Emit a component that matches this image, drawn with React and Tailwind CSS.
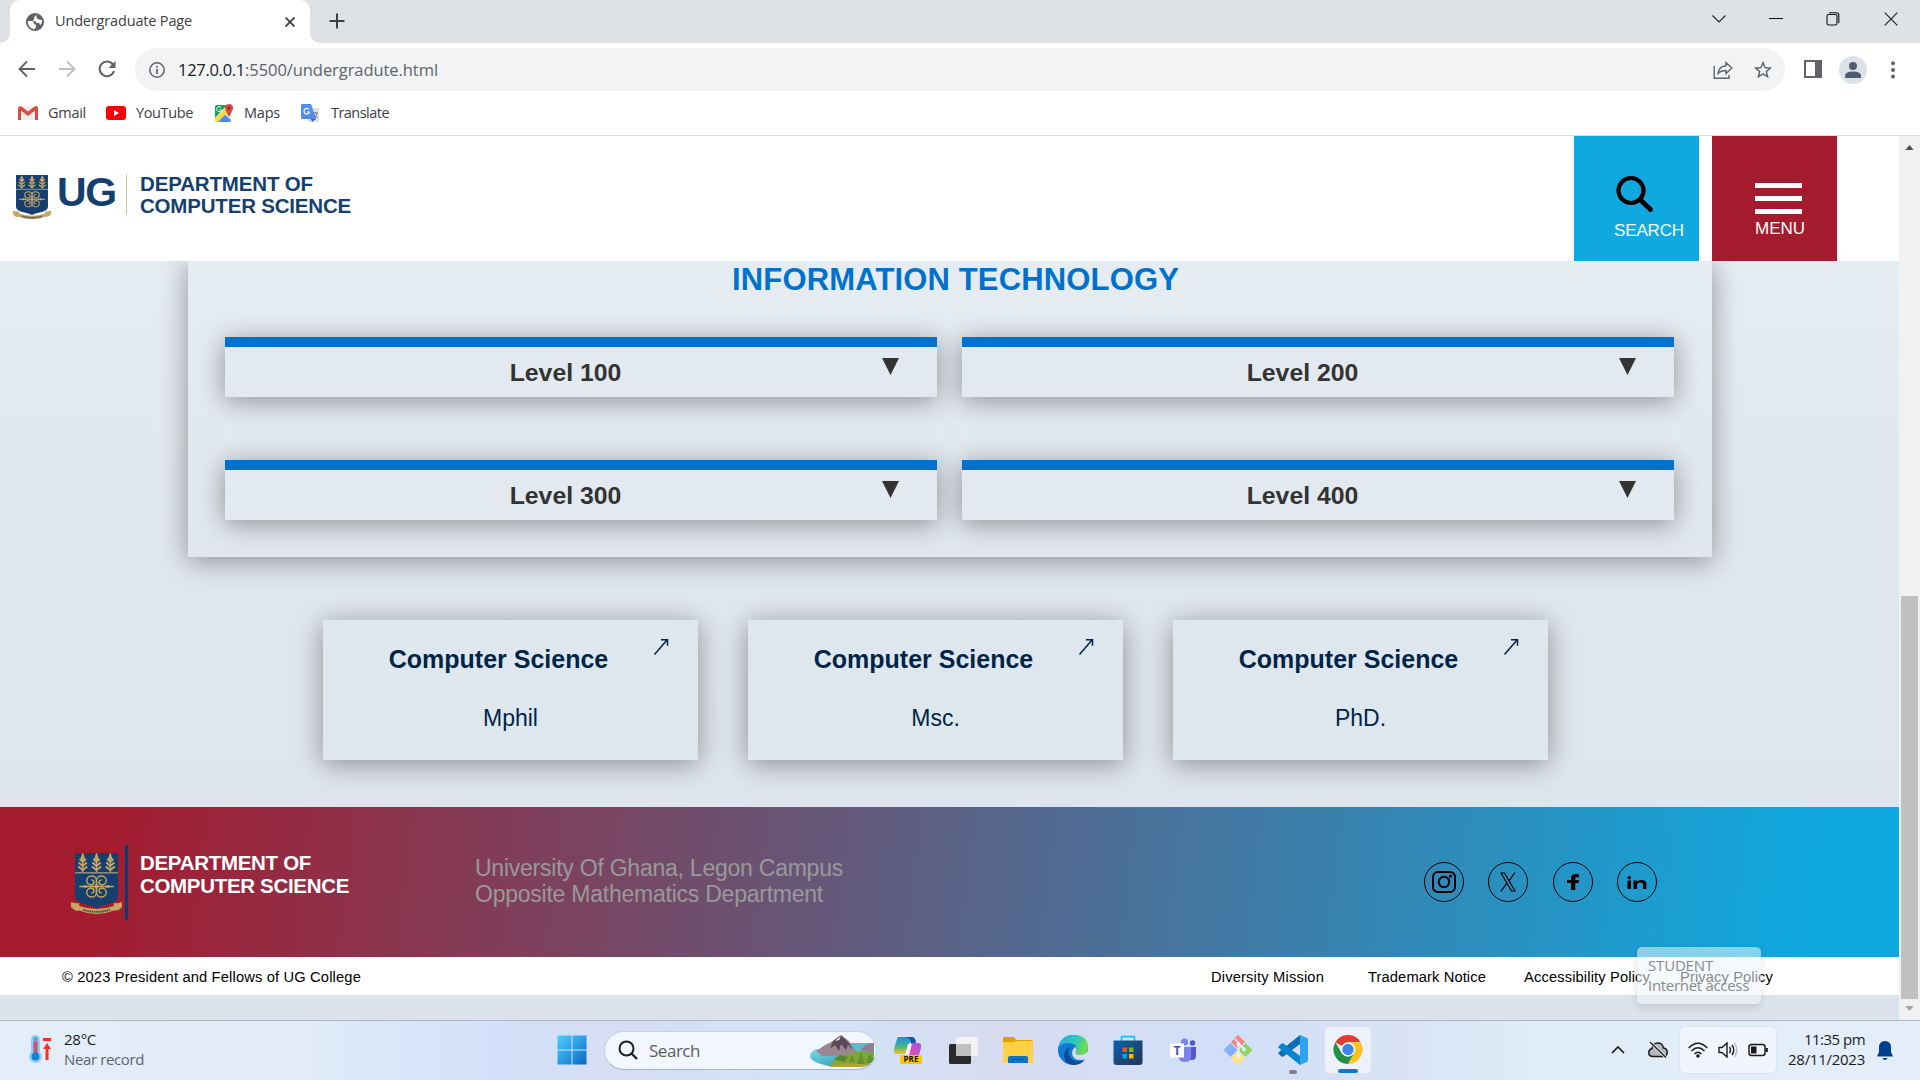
import React from "react";

const segoe = "font-['Open_Sans','Noto_Sans',sans-serif]";
const arial = "font-['Liberation_Sans',Arial,sans-serif]";

// Text set to a fixed measure by adjusting its tracking.
function Txt({ w, className, children }) {
  const ref = React.useRef(null);
  const [ls, setLs] = React.useState(0);
  React.useLayoutEffect(() => {
    const fit = () => {
      const el = ref.current;
      if (!el) return;
      el.style.letterSpacing = "0px";
      const d = (w - el.getBoundingClientRect().width) / children.length;
      el.style.letterSpacing = d + "px";
      setLs(d);
    };
    fit();
    document.fonts?.ready.then(fit);
  }, [w, children]);
  return (
    <span ref={ref} className={"inline-block whitespace-nowrap " + className} style={{ letterSpacing: ls + "px" }}>
      {children}
    </span>
  );
}

function Swirls({ stroke }) {
  const curl = "M25 33.500q-.5-3 0-6.500a4.800 4.500 0 1 0-5.500 5q3.200-.3 3-3-.3-2.200-2.500-2";
  return (
    <g fill="none" stroke={stroke} strokeWidth="1.400">
      <path d={curl} />
      <path d={curl} transform="translate(50 0) scale(-1 1)" />
      <path d={curl} transform="translate(0 67) scale(1 -1)" />
      <path d={curl} transform="translate(50 67) scale(-1 -1)" />
      <path d="M8 33.500h34" />
      <path d="M11 33.500q3-2 6 0-3 2-6 0zM39 33.500q-3-2-6 0 3 2 6 0z" fill={stroke} strokeWidth=".6" />
    </g>
  );
}

function Crest({ className }) {
  const gold = "#c9a563";
  return (
    <svg viewBox="0 0 50 62" preserveAspectRatio="none" className={className}>
      <path d="M4 0h42v44q0 5-11 7.500-6 1-10 3.500-4-2.500-10-3.500Q4 49 4 44z" fill="#153f6f" />
      <rect x="4" y="19" width="42" height="1.600" fill="#8d8c78" />
      {[11.500, 25, 38.500].map((x) => (
        <g key={x} stroke={gold} fill={gold} strokeWidth="1.300">
          <path d={`M${x} 1l1.600 5h-3.200zM${x} 19V3`} />
          <path fill="none" strokeWidth="1.900" d={`M${x - 3} 6l3 3 3-3M${x - 4} 9.500l4 3.500 4-3.500M${x - 4.500} 13.500l4.500 3.500 4.500-3.500`} />
        </g>
      ))}
      <Swirls stroke={gold} />
      <circle cx="25" cy="33.500" r="2" fill={gold} />
      <path d="M0 49q5 2 8 1v3q17 6 34 0v-3q3 1 8-1v5l-2 2q-2 2-6 1.500-17 7-34 0-4 1-6-1.500L0 54z" fill={gold} />
      <path d="M12 56.800q13 4 26 0" fill="none" stroke="#4a4a48" strokeWidth="2" strokeDasharray="1.500 .6" />
    </svg>
  );
}

function ChromeTabs() {
  return (
    <div className="flex h-[43px] shrink-0 bg-[#dee1e6]">
      <div className="flex w-[10px] items-end bg-white"><div className="h-full w-full rounded-br-[10px] bg-[#dee1e6]" /></div>
      <div className="flex w-[300px] items-center rounded-t-[10px] bg-white pl-4 pr-[12px]">
        <svg viewBox="0 0 18 18" className="h-[18px] w-[18px]">
          <circle cx="9" cy="9" r="9" fill="#5f6368" />
          <path d="M1.800 8h4q2 0 2 2t2.200 1.800V14l-1.500 2.200Q2 15.500 1.800 8zM10.500 2L8 4.500v2L6.500 8q4-.5 4 2h2.300q1.200 0 1.200 2.500Q16.500 10 16 7l-3-.5-2.200-1.200z" fill="#fff" />
        </svg>
        <Txt w={137} className="ml-[11px] text-[14.500px] leading-none text-[#3c4043]">Undergraduate Page</Txt>
        <svg viewBox="0 0 10 10" className="ml-auto mr-[3px] h-[10px] w-[10px]" stroke="#3c4043" strokeWidth="1.800"><path d="M.5.5l9 9M9.500.5l-9 9" /></svg>
      </div>
      <div className="flex w-[10px] bg-white"><div className="h-full w-full rounded-bl-[10px] bg-[#dee1e6]" /></div>
      <svg viewBox="0 0 16 16" className="ml-[9px] mt-[13px] h-4 w-4" stroke="#3c4043" strokeWidth="2"><path d="M8 .5v15M.5 8h15" /></svg>
      <div className="ml-auto flex items-start pt-[11px]" >
        <svg viewBox="0 0 14 16" className="mr-[43px] h-4 w-[14px]" fill="none" stroke="#222" strokeWidth="1.200"><path d="M.5 4.500L7 11l6.500-6.500" /></svg>
        <svg viewBox="0 0 14 16" className="mr-[43px] h-4 w-[14px]" stroke="#111" strokeWidth="1"><path d="M0 7.500h14" /></svg>
        <svg viewBox="0 0 14 14" className="mr-[44px] mt-px h-[14px] w-[14px]" fill="none" stroke="#111" strokeWidth="1.100"><rect x="1" y="2.500" width="10" height="10.500" rx="1.500" /><path d="M3 .8h7.500q2.300 0 2.300 2.300V11" /></svg>
        <svg viewBox="0 0 14 14" className="mr-[22px] mt-px h-[14px] w-[14px]" stroke="#222" strokeWidth="1.200"><path d="M.7.7l12.600 12.600M13.300.7L.7 13.300" /></svg>
      </div>
    </div>
  );
}

function ChromeBar() {
  return (
    <div className="flex h-[53px] shrink-0 items-center bg-white">
      <svg viewBox="0 0 18 18" className="-mt-px ml-[18px] h-[18px] w-[18px]" fill="none" stroke="#5f6368" strokeWidth="1.900"><path d="M17 9H2M9 1.500L1.500 9 9 16.500" /></svg>
      <svg viewBox="0 0 18 18" className="-mt-px ml-[22px] h-[18px] w-[18px]" fill="none" stroke="#bdc1c6" strokeWidth="1.900"><path d="M1 9h15M9 1.500L16.500 9 9 16.500" /></svg>
      <svg viewBox="0 0 18 18" className="-mt-px ml-[22px] h-[18px] w-[18px]" fill="none" stroke="#5f6368" strokeWidth="2"><path d="M15.200 5A7.300 7.300 0 1 0 16 11" /><path d="M17.500 1v7h-7z" fill="#5f6368" stroke="none" /></svg>
      <div className="ml-[19px] flex h-[43px] w-[1650px] items-center rounded-full bg-[#f1f3f4] pl-[14px] pr-[11px]">
        <svg viewBox="0 0 16 16" className="h-4 w-4" fill="none" stroke="#5f6368" strokeWidth="1.500"><circle cx="8" cy="8" r="7.200" /><path d="M8 7v5M8 4v1.800" strokeWidth="1.700" /></svg>
        <div className="ml-[13px] mt-[1px] flex text-[16.500px] leading-none text-[#5f6368]">
          <Txt w={67} className="text-[#202124]">127.0.0.1</Txt>
          <Txt w={193} className="">:5500/undergradute.html</Txt>
        </div>
        <svg viewBox="0 0 20 18" className="ml-auto h-[18px] w-5" fill="none" stroke="#5f6368" strokeWidth="1.400"><path d="M1.200 5v12.200H16V14M13 1.500L18.800 7 13 12.500V9.500q-5 0-8 3Q6 5 13 4.700z" /></svg>
        <svg viewBox="0 0 24 24" className="ml-[19px] h-[22px] w-[22px]" fill="#5f6368"><path d="M22 9.240l-7.190-.62L12 2 9.190 8.630 2 9.240l5.460 4.730L5.820 21 12 17.270 18.180 21l-1.630-7.030L22 9.240zM12 15.400l-3.760 2.270 1-4.280-3.320-2.880 4.380-.38L12 6.100l1.710 4.040 4.380.38-3.320 2.880 1 4.280L12 15.400z" /></svg>
      </div>
      <div className="-mt-px ml-[19px] h-[18px] w-[18px] border-2 border-r-[7px] border-[#5f6368]" />
      <svg viewBox="0 0 28 28" className="ml-[17px] h-7 w-7"><circle cx="14" cy="14" r="14" fill="#dee1e6" /><circle cx="14" cy="10" r="4" fill="#4f5b70" /><path d="M6 22v-2q0-4.500 8-4.500t8 4.500v2z" fill="#4f5b70" /></svg>
      <svg viewBox="0 0 4 18" className="ml-[24px] h-[18px] w-1" fill="#5f6368"><circle cx="2" cy="2.200" r="2" /><circle cx="2" cy="9" r="2" /><circle cx="2" cy="15.500" r="2" /></svg>
    </div>
  );
}

function Bookmarks() {
  const t = "text-[14.500px] leading-none text-[#3c4043]";
  return (
    <div className="flex h-[40px] shrink-0 items-start border-b border-[#d8d9dc] bg-white pl-[18px] pt-[4px]">
      <div className="flex h-[26px] items-center">
        <svg viewBox="0 0 20 14" className="h-[14px] w-5"><path d="M0 0h20v14H0z" fill="#eee" /><path d="M0 2v12h3V4.500L10 10l7-5.500V14h3V2q-1-3-3.500-1.500L10 5.500 3.500.5Q1-.5 0 2z" fill="#dd4b3e" /></svg>
        <Txt w={38} className={t + " ml-[10px]"}>Gmail</Txt>
        <svg viewBox="0 0 20 14" className="ml-5 h-[14px] w-5"><rect width="20" height="14" rx="3" fill="#f00" /><path d="M8 4l5 3-5 3z" fill="#fff" /></svg>
        <Txt w={57} className={t + " ml-[10px]"}>YouTube</Txt>
        <svg viewBox="0 0 18 18" className="ml-[22px] h-[18px] w-[18px]"><rect y="1" width="16" height="17" rx="2" fill="#e8eaed" /><path d="M0 3q0-2 2-2h10L0 14z" fill="#1e9e55" /><path d="M8 9l8 7q0 2-2 2H3z" fill="#4a8af4" /><path d="M0 15L11 4l3 3L3 18H2q-2 0-2-2z" fill="#fdd835" /><path d="M14 0q4 0 4 4 0 2-4 9-4-7-4-9 0-4 4-4z" fill="#dd4b3e" /><circle cx="14" cy="4" r="1.400" fill="#7b231d" /><path d="M6 3.500A2.500 2.500 0 1 0 6.500 6H4.500" fill="none" stroke="#fff" /></svg>
        <Txt w={36} className={t + " ml-[11px]"}>Maps</Txt>
        <svg viewBox="0 0 18 18" className="ml-[21px] h-[18px] w-[18px]"><rect x="7" y="4" width="11" height="14" rx="1" fill="#dfe1e5" /><path d="M1 0h9l5 15H1q-1 0-1-1V1q0-1 1-1z" fill="#4f8df5" /><path d="M10 15h5l-4 3z" fill="#2a5fd0" /><path d="M8 5.500A2.800 2.800 0 1 0 8.500 8H6" fill="none" stroke="#fff" strokeWidth="1.200" /><path d="M12 9h5M14.500 8v1M16 9.500q-1 3-3 4.500M13.500 11l3 3" fill="none" stroke="#667" strokeWidth=".9" /></svg>
        <Txt w={58} className={t + " ml-[12px]"}>Translate</Txt>
      </div>
    </div>
  );
}

const shadow = "shadow-[0_4px_26px_rgba(16,14,4,0.4)]";

function Level({ n }) {
  return (
    <div className={"flex h-[60px] w-[712px] border-t-[10px] border-[#0072ce] bg-[#e2e9f0] text-[#333] " + shadow}>
      <div className="w-[681px] text-center text-[24.800px] leading-[51px] font-bold">Level {n}</div>
      <svg viewBox="0 0 17 17" className="-ml-[24px] mt-[11px] h-[17px] w-[17px]"><path d="M0 0h17L8.500 17z" fill="#333" /></svg>
    </div>
  );
}

function Programme({ kind }) {
  return (
    <div className={"flex h-[140px] w-[375px] bg-[#dfe7ee] text-[#002548] " + shadow}>
      <div className="w-[375px] text-center">
        <div className="mt-[25px] pr-[24px] text-[25px] leading-[28px] font-bold">Computer Science</div>
        <div className="mt-[31px] text-[23px] leading-[28px]">{kind}</div>
      </div>
      <svg viewBox="0 0 16 17" className="-ml-[45px] mt-[18px] h-[17px] w-4 shrink-0" fill="none" stroke="#002548" strokeWidth="1.500"><path d="M1.500 16.500L14 2M8 1.700h6.500v6" /></svg>
    </div>
  );
}

function SiteHeader() {
  return (
    <div className="flex h-[125px] shrink-0 bg-white">
      <Crest className="ml-[13px] mt-[39px] h-[45px] w-[38px]" />
      <Txt w={59} className="ml-[6px] mt-[34px] h-[44px] text-[41px] leading-[44px] font-bold text-[#153f6f]">UG</Txt>
      <div className="ml-[10px] mt-[38px] h-[41px] w-px bg-[#d9c49a]" />
      <div className="ml-[13px] mt-[37px] flex flex-col items-start text-[20.500px] leading-[22px] font-bold text-[#153f6f]">
        <Txt w={173} className="">DEPARTMENT OF</Txt>
        <Txt w={211} className="">COMPUTER SCIENCE</Txt>
      </div>
      <div className="ml-auto h-[125px] w-[125px] bg-[#0fa9df] pl-10 pt-10 text-white">
        <svg viewBox="0 0 42 38" className="h-[38px] w-[42px]" fill="none" stroke="#000"><circle cx="17" cy="14.500" r="12.500" strokeWidth="4.200" /><path d="M26.500 24L36.500 33.500" strokeWidth="5" strokeLinecap="round" /></svg>
        <div className="mt-[7px] text-[17px] leading-[19px]"><Txt w={70} className="">SEARCH</Txt></div>
      </div>
      <div className="ml-[13px] mr-[62px] h-[125px] w-[125px] bg-[#a51b2e] pl-[43px] pt-[47px] text-white">
        <div className="flex w-[47px] flex-col gap-2">
          <div className="h-[5px] bg-white" />
          <div className="h-[5px] bg-white" />
          <div className="h-[5px] bg-white" />
        </div>
        <div className="mt-[5px] text-[17px] leading-[19px]"><Txt w={50} className="">MENU</Txt></div>
      </div>
    </div>
  );
}

function Socials() {
  const ring = "flex h-10 w-10 items-center justify-center rounded-full border-[1.500px] border-black";
  return (
    <div className="ml-auto mr-[242px] mt-[55px] flex gap-[24.500px]">
      <div className={ring}><svg viewBox="0 0 24 22" className="h-[22px] w-6" fill="none" stroke="#000" strokeWidth="2"><rect x="1" y="1" width="22" height="20" rx="5" /><circle cx="12" cy="11" r="5.200" /><circle cx="18.500" cy="5.200" r=".6" /></svg></div>
      <div className={ring}><svg viewBox="0 0 16 20" className="h-5 w-4" fill="none" stroke="#000" strokeWidth="1.200"><path d="M1 1h3.500l10.500 18h-3.500zM15 .5L9 8.800M7 11.200L.8 19.500" /></svg></div>
      <div className={ring}><svg viewBox="0 0 12 16" className="h-4 w-3"><path d="M12 .3v3H9.800Q8.300 3.300 8.300 4.500V6H12l-.5 3H8.300v7H4V9H0V6h4V4.500Q4 0 8.500 0z" fill="#000" /></svg></div>
      <div className={ring}><svg viewBox="0 0 20 13" className="h-[13px] w-5" fill="#000"><circle cx="2.200" cy="1.800" r="1.800" /><path d="M.5 4.500H4V13H.5zM6.500 4.500H10v1q1.500-1.500 4-1.500 5.500 0 5.500 4v5H16V8.500q0-2-2.500-2-3.500 0-3.500 2.500v4H6.500z" /></svg></div>
    </div>
  );
}

function Footer() {
  return (
    <>
      <div className="flex h-[150px] shrink-0 bg-[linear-gradient(97deg,#a51b2e_5%,#0fa9df_95%)]">
        <Crest className="ml-[71px] mt-[46px] h-[62px] w-[51px]" />
        <div className="ml-[3px] mt-[38px] h-[75px] w-[3px] bg-[#063e6f]" />
        <div className="ml-[12px] mt-[44px] flex w-[335px] flex-col items-start text-[20.500px] leading-[23px] font-bold text-white">
          <Txt w={171} className="">DEPARTMENT OF</Txt>
          <Txt w={209} className="">COMPUTER SCIENCE</Txt>
        </div>
        <div className="mt-[48px] flex flex-col items-start text-[23px] leading-[26px] text-[#999]">
          <Txt w={368} className="">University Of Ghana, Legon Campus</Txt>
          <Txt w={348} className="">Opposite Mathematics Department</Txt>
        </div>
        <Socials />
      </div>
      <div className="flex h-[38px] shrink-0 items-center bg-white pl-[62px] pr-[126px] pt-[3px] text-[14.700px] text-black">
        <Txt w={299} className="mr-auto">© 2023 President and Fellows of UG College</Txt>
        <Txt w={113} className="mr-[44px]">Diversity Mission</Txt>
        <Txt w={118} className="mr-[38px]">Trademark Notice</Txt>
        <Txt w={126} className="mr-[30px]">Accessibility Policy</Txt>
        <Txt w={93} className="">Privacy Policy</Txt>
      </div>
    </>
  );
}

function Page() {
  return (
    <div className={"flex h-[884px] w-[1899px] flex-col overflow-hidden bg-[linear-gradient(#e5edf2_14%,#e1e8ef_35%,#dfe6ee_60%,#dce3ec)] " + arial}>
      <div className="relative z-10"><SiteHeader /></div>
      <div className={"ml-[188px] h-[296px] w-[1524px] shrink-0 " + shadow}>
        <div className="h-[76px] pt-[1px] pl-[11px] text-center text-[31px] leading-[36px] font-bold text-[#0072ce]"><Txt w={447} className="">INFORMATION TECHNOLOGY</Txt></div>
        <div className="flex flex-wrap gap-x-[25px] gap-y-[63px] pl-[37px]">
          {[100, 200, 300, 400].map((n) => <Level key={n} n={n} />)}
        </div>
      </div>
      <div className="ml-[323px] mt-[63px] mb-[47px] flex shrink-0 gap-[50px]">
        {["Mphil", "Msc.", "PhD."].map((k) => <Programme key={k} kind={k} />)}
      </div>
      <div className="relative z-10"><Footer /></div>
    </div>
  );
}

function Scrollbar() {
  return (
    <div className="flex w-[21px] flex-col items-center bg-[#f1f1f1]">
      <svg viewBox="0 0 10 6" className="mt-[9px] h-[5px] w-[9px]"><path d="M0 6l5-6 5 6z" fill="#505050" /></svg>
      <div className="mt-[446px] h-[403px] w-[17px] bg-[#c1c1c1]" />
      <svg viewBox="0 0 10 6" className="mt-[7px] h-[5px] w-[9px]"><path d="M0 0l5 6 5-6z" fill="#a3a3a3" /></svg>
    </div>
  );
}

const Copilot = () => (
  <svg viewBox="0 0 30 30" className="h-[30px] w-[30px]">
    <defs>
      <linearGradient id="cpa" x1="0" y1="0" x2="0" y2="1"><stop stopColor="#1b8ce8" /><stop offset=".6" stopColor="#4db77e" /><stop offset="1" stopColor="#f5c51b" /></linearGradient>
      <linearGradient id="cpb" x1="1" y1="0" x2="0" y2="1"><stop stopColor="#a44df0" /><stop offset="1" stopColor="#f7598b" /></linearGradient>
    </defs>
    <path d="M6 2h13q3 0 4 5h-5q-2 0-3 4l-2 8H4q-4 0-3-5L4 4q0-2 2-2z" fill="url(#cpa)" />
    <path d="M12 2h7q3 0 4 6h-5q0-5-6-6z" fill="#1555b8" />
    <path d="M18 8h7q4 0 3 5l-2 7q-1 4-5 4h-9q3 0 4-4z" fill="url(#cpb)" />
    <path d="M15 9l4 0-3 11h-4z" fill="#f3effb" />
    <rect x="7" y="20" width="22" height="9" rx="2" fill="#fdc500" />
    <text x="18" y="27.300" textAnchor="middle" fontSize="8" fontWeight="700" fontFamily="Open Sans" fill="#111">PRE</text>
  </svg>
);
const TaskView = () => (
  <svg viewBox="0 0 30 30" className="h-[30px] w-[30px]">
    <rect x="1" y="9" width="22" height="20" rx="1.500" fill="#2a2a2a" />
    <rect x="8" y="2" width="22" height="19" rx="1.500" fill="#f1f2f4" />
    <path d="M8 9h15v12H8z" fill="#bfc0c2" />
  </svg>
);
const Folder = () => (
  <svg viewBox="0 0 30 30" className="h-[30px] w-[30px]">
    <path d="M0 3q0-1 1-1h10l2 3h16q1 0 1 1v5H0z" fill="#dfa000" />
    <path d="M0 7h10l3-1h17v22H1q-1 0-1-1z" fill="#ffd045" />
    <path d="M5 28v-5q0-2 2-2h16q2 0 2 2v5z" fill="#1173c8" /><path d="M9 24.500h12" stroke="#0a4f9b" />
  </svg>
);
const Edge = () => (
  <svg viewBox="0 0 30 30" className="h-[30px] w-[30px]">
    <defs><linearGradient id="eda" x1="0" y1="0" x2="1" y2=".3"><stop stopColor="#2aa6e8" /><stop offset=".6" stopColor="#2cc7c4" /><stop offset="1" stopColor="#6fdc4a" /></linearGradient></defs>
    <circle cx="15" cy="15" r="15" fill="#0c7cd5" />
    <path d="M.5 13Q3 0 15 0q15 0 15 12 0 8-7.500 8-5 0-5-2.500 2-2 1.500-5Q17 8 10 8 3 8.500.5 13z" fill="url(#eda)" />
    <path d="M13 12q-5 4-1 10 4 6 12 4l3-1.500Q23 30 15 30 6 29 6 20q0-6 7-8z" fill="#104b98" />
    <path d="M17.500 17.500q0 2.500 5 2.500 4 0 7.500-4v6l-3 2.500q-10 2-12.500-4-1.500-5 3-9 2 3 0 6z" fill="#d6def4" />
  </svg>
);
const Store = () => (
  <svg viewBox="0 0 30 30" className="h-[30px] w-[30px]">
    <defs><linearGradient id="sta" x1="0" y1="0" x2="1" y2="1"><stop stopColor="#0862ad" /><stop offset="1" stopColor="#26344f" /></linearGradient></defs>
    <path d="M8.500 7V2.500q0-.8.8-.8h11.400q.8 0 .8.800V7" fill="none" stroke="#28b8ee" strokeWidth="1.700" />
    <path d="M.5 5.500h29V27q0 3-3 3h-23q-3 0-3-3z" fill="url(#sta)" />
    <path d="M9.500 12.500H14V17H9.500z" fill="#f25022" /><path d="M16 12.500h4.500V17H16z" fill="#7fba00" /><path d="M9.500 19H14v4.500H9.500z" fill="#00a4ef" /><path d="M16 19h4.500v4.500H16z" fill="#ffb900" />
  </svg>
);
const Teams = () => (
  <svg viewBox="0 0 30 30" className="h-[30px] w-[30px]">
    <circle cx="16.500" cy="7" r="3.500" fill="#7b83eb" /><circle cx="24.500" cy="8" r="2.700" fill="#5059c9" />
    <path d="M19 12h9v9q0 4-4 4t-5-4z" fill="#5059c9" /><path d="M10 12h13v9q0 6-6 6t-7-6z" fill="#7b83eb" />
    <rect x="2" y="8.500" width="14" height="14" fill="#fff" /><text x="9" y="20" textAnchor="middle" fontSize="12.500" fontWeight="700" fontFamily="Open Sans" fill="#4b53bc">T</text>
  </svg>
);
const Git = () => (
  <svg viewBox="0 0 30 30" className="h-[30px] w-[30px]">
    <path d="M15 0l7 7-7 7-7-7z" fill="#ff8080" /><path d="M7.500 8l7 7-7 7-7-7z" fill="#80b0ff" /><path d="M22.500 8l7 7-7 7-7-7z" fill="#8fd45e" /><path d="M15 16l7 7-7 7-7-7z" fill="#ffe680" />
    <path d="M12 4l3.500 4v14M15.500 9l6 5" fill="none" stroke="#eceefa" strokeWidth="1.800" /><circle cx="15.500" cy="9" r="2" fill="#eceefa" /><circle cx="21" cy="14.500" r="2" fill="#eceefa" /><circle cx="15.500" cy="21" r="2" fill="#eceefa" />
  </svg>
);
const Code = () => (
  <svg viewBox="0 0 30 30" className="h-[30px] w-[30px]">
    <path d="M22 0v9L5.500 21.500q-1 .7-2 0L.6 18.800q-.8-.8 0-1.600z" fill="#0b6fb5" />
    <path d="M22 30v-9L5.500 8.500q-1-.7-2 0L.6 11.200q-.8.800 0 1.600z" fill="#0a84cf" />
    <path d="M22 0l7 3q1 .5 1 2v20q0 1.500-1 2l-7 3z" fill="#2ea3f0" />
  </svg>
);
const Chrome = () => (
  <svg viewBox="0 0 30 30" className="h-[30px] w-[30px]">
    <path d="M15 15L2 7.500A15 15 0 0 1 28 7.500H15z" fill="#df3c30" />
    <path d="M15 7.500H28A15 15 0 0 1 15 30l6.500-11z" fill="#fcc31e" />
    <path d="M2 7.500l6.500 11.300q3 4 8 3.500L15 30A15 15 0 0 1 2 7.500z" fill="#239145" />
    <path d="M21.500 18.700L15 30l-3-9z" fill="#239145" /><path d="M21.500 18.800L15 30h2L28 20l-3-10z" fill="#fcc31e" />
    <circle cx="15" cy="15" r="7.400" fill="#fff" /><circle cx="15" cy="15" r="5.900" fill="#3e83ee" />
  </svg>
);

function Landscape() {
  return (
    <svg viewBox="0 0 64 32" className="h-8 w-16">
      <defs><clipPath id="land"><path d="M6 14q4-7 20-12l6-2 10 4 4 4 18 0v16q-4 7-14 8H24Q0 28 0 21q0-4 6-7z" /></clipPath><linearGradient id="lake" x1="0" y1="0" x2="1" y2="1"><stop stopColor="#7fdcea" /><stop offset="1" stopColor="#16889c" /></linearGradient></defs>
      <g clipPath="url(#land)">
        <path d="M0 14h64v18H0z" fill="url(#lake)" /><path d="M38 8h26v8H38z" fill="#5bbccb" />
        <path d="M6 16l9-6 8-4 8-6 8 6 5 8 6 5-8 2H12z" fill="#9c8791" /><path d="M31 0l-8 6-3 8 5-4 4 6 2-7 5 6 2-5 6 5-7-9z" fill="#5b4858" /><path d="M31 1l-6 5 4-1z" fill="#fff" />
        <path d="M50 15l7-6 7-1v9z" fill="#947c88" />
        <path d="M20 32q4-10 16-12l14-4 14 2v14z" fill="#81a537" /><path d="M14 32q20-6 50-2v2z" fill="#b7a034" />
        <path d="M51 17l4 12h-8zM42 20l3 7h-6zM60 18l4 10h-8z" fill="#5d932c" /><path d="M24 24l6-4 8 2-4 5z" fill="#55872e" />
      </g>
    </svg>
  );
}

function Taskbar() {
  return (
    <div className="flex h-[60px] shrink-0 border-t border-[#b0b6c0] bg-[linear-gradient(90deg,#e3eef8_0%,#e1ecf8_16%,#d3e1fa_25%,#d6def4_32%,#d3e3fa_42%,#d7dcf0_52%,#d2dff8_64%,#d8e2f5_72%,#e0ecf8_80%,#e3eef9_100%)]">
      <div className="flex w-[557px] pl-[29px] pt-[13px]">
        <svg viewBox="0 0 22 30" className="h-[30px] w-[22px]">
          <rect x="2" y="1" width="9" height="22" rx="4.500" fill="#93cdf8" /><circle cx="6.500" cy="22.500" r="6.500" fill="#93cdf8" />
          <path d="M6.500 3v18" stroke="#8c8fc2" strokeWidth="4" /><path d="M6.500 8v13" stroke="#c2567e" strokeWidth="4" /><circle cx="6.500" cy="22.500" r="4" fill="#0f84d9" />
          <path d="M14 5.500h8" stroke="#ff2d1a" strokeWidth="3" /><path d="M18 9l4 6h-2.500v11h-3V15H14z" fill="#ff2d1a" />
        </svg>
        <div className="ml-[13px] flex flex-col items-start text-[15px] leading-5">
          <Txt w={32} className="-mt-[5px] text-[#1b1b1b]">28°C</Txt>
          <Txt w={80} className="text-[#5d646c]">Near record</Txt>
        </div>
      </div>
      <svg viewBox="0 0 30 30" className="mt-[14px] h-[30px] w-[30px]"><defs><linearGradient id="wn" x1="0" y1="0" x2="1" y2="1"><stop stopColor="#4fcffb" /><stop offset="1" stopColor="#0569c8" /></linearGradient></defs><path d="M.5.5H14.500V14.500H.5zM15.500.5H29.500V14.500H15.500zM.5 15.500H14.500V29.500H.5zM15.500 15.500H29.500V29.500H15.500z" fill="url(#wn)" /></svg>
      <div className="ml-[17px] mt-[10px] flex h-[39px] w-[273px] items-center rounded-full border border-[#c5d0e6] border-b-[#a9b1c4] bg-[#f2f6fe] pl-[13px]">
        <svg viewBox="0 0 20 20" className="-mt-px h-5 w-5" fill="none" stroke="#222" strokeWidth="2"><circle cx="8.500" cy="8.500" r="7" /><path d="M13.500 13.500l5.500 5.500" strokeWidth="2.400" /></svg>
        <Txt w={51} className="ml-[11px] text-[17px] text-[#5d5d5d]">Search</Txt>
        <div className="ml-auto mr-[2px] flex"><Landscape /></div>
      </div>
      <div className="ml-[16px] mt-[14px] flex gap-[25px] self-start">
        <Copilot /><TaskView /><Folder /><Edge /><Store /><Teams /><Git />
        <div className="flex flex-col items-center"><Code /><div className="mt-[5px] h-1 w-2 rounded-full bg-[#7c818b]" /></div>
      </div>
      <div className="ml-[16px] mt-[5px] flex h-[48px] w-12 flex-col items-center rounded-md border border-[#dde3ef] bg-[#edf1fa] pt-2">
        <Chrome /><div className="mt-[5px] h-1 w-5 shrink-0 rounded-full bg-[#0b78d6]" />
      </div>
      <div className="ml-auto flex items-start">
        <svg viewBox="0 0 14 8" className="mt-[25px] h-2 w-[14px]" fill="none" stroke="#1b1b1b" strokeWidth="1.700"><path d="M1 7l6-6 6 6" /></svg>
        <svg viewBox="0 0 20 16" className="ml-[23px] mt-[21px] h-4 w-5"><path d="M5 14.500Q.8 14.500.8 10.500.8 7.500 4 6.500 5 1 10 1q4.500 0 5.500 5 3.700.5 3.700 4.300 0 4.200-4.200 4.200z" fill="#b4b7bb" stroke="#1b1b1b" strokeWidth="1.500" /><path d="M2 0l16 15.500" stroke="#f0f4fa" strokeWidth="3" /><path d="M2 0l16 15.500" stroke="#1b1b1b" strokeWidth="1.400" /></svg>
        <div className="ml-[11px] mt-[5px] flex h-12 w-[98px] items-center rounded-md border border-[#dbe4f2] bg-[#f1f6fe] pl-2">
          <svg viewBox="0 0 20 16" className="h-4 w-5" fill="none" stroke="#1b1b1b" strokeWidth="1.500"><path d="M.7 6Q10-3.500 19.300 6M3.500 9q6.500-6.500 13 0M6.500 12q3.500-3.500 7 0" /><circle cx="10" cy="14" r="1.800" fill="#1b1b1b" stroke="none" /></svg>
          <svg viewBox="0 0 20 16" className="ml-[10px] h-4 w-5" fill="none" stroke="#1b1b1b" strokeWidth="1.400"><path d="M1 5.500h3l5-4.500v14l-5-4.500H1zM11.500 5q2 3 0 6M14 3q3.500 5 0 10" /><path d="M16.500 1q4.500 7 0 14" stroke="#bbb" /></svg>
          <svg viewBox="0 0 20 14" className="ml-[10px] h-[14px] w-5" fill="none" stroke="#1b1b1b" strokeWidth="1.500"><rect x="1" y="1.500" width="16" height="11" rx="2.500" /><rect x="3" y="3.500" width="5.500" height="7" fill="#1b1b1b" stroke="none" /><path d="M18.800 5v4" strokeWidth="2" /></svg>
        </div>
        <div className="ml-[11px] mt-[8px] flex w-[77px] flex-col items-end text-[15px] leading-5 text-[#1b1b1b]">
          <Txt w={61} className="">11:35 pm</Txt>
          <Txt w={77} className="">28/11/2023</Txt>
        </div>
        <svg viewBox="0 0 16 19" className="ml-[12px] mr-[27px] mt-5 h-[19px] w-4" fill="#003e92"><path d="M8 0q6 0 6 6.500V11l2 4.500H0L2 11V6.500Q2 0 8 0zM5.500 17h5q-.5 2-2.500 2t-2.500-2z" /></svg>
      </div>
    </div>
  );
}

export default function App() {
  return (
    <div className={"relative flex h-[1080px] w-[1920px] flex-col overflow-hidden bg-white " + segoe}>
      <ChromeTabs />
      <ChromeBar />
      <Bookmarks />
      <div className="flex h-[884px] shrink-0">
        <Page />
        <Scrollbar />
      </div>
      <Taskbar />
      <div className="absolute left-[1637px] top-[947px] z-20 flex h-[57px] w-[124px] flex-col items-start rounded-[5px] bg-[#eef4fa]/55 pl-[11px] pt-[8px] text-[15px] leading-[20px] text-[#868a8d] shadow-[0_4px_8px_rgba(0,0,0,0.12)]">
        <Txt w={65} className="">STUDENT</Txt>
        <Txt w={101} className="">Internet access</Txt>
      </div>
    </div>
  );
}
